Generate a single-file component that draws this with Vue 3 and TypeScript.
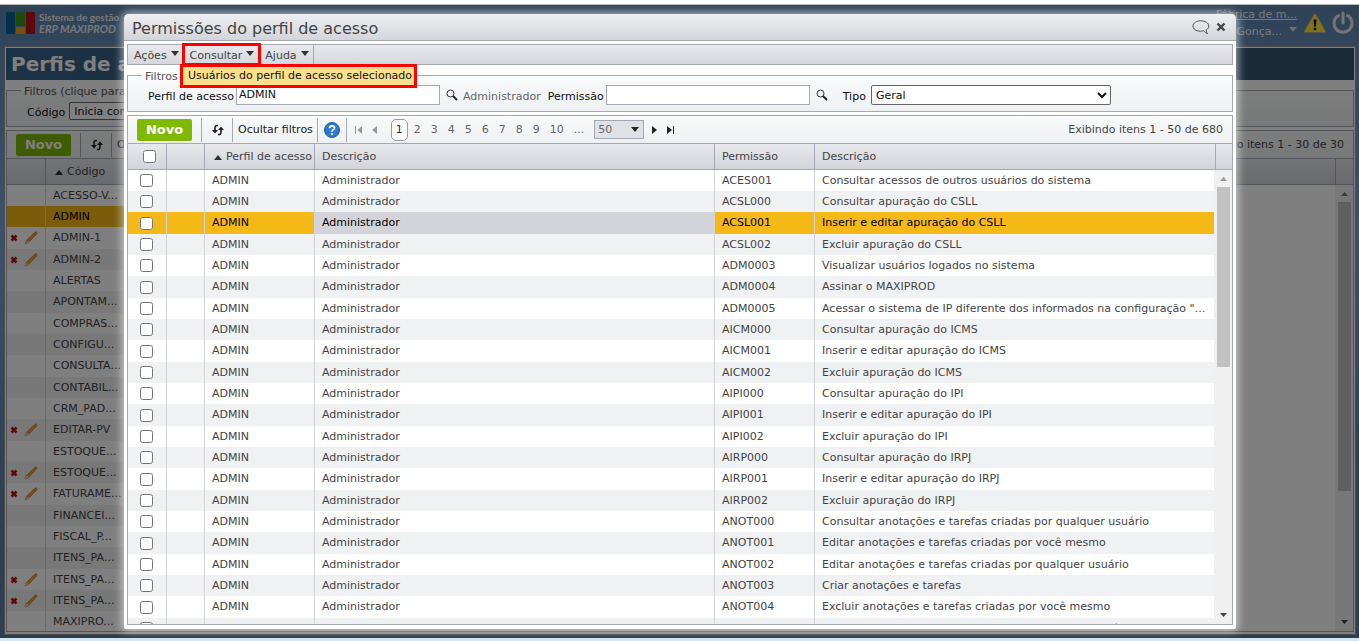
<script setup lang="ts">
import { ref } from 'vue'

interface Profile { code: string; editable?: boolean; selected?: boolean }
interface Permission { code: string; text: string; selected?: boolean }

const profiles: Profile[] = [
  { code: 'ACESSO-V...' },
  { code: 'ADMIN', selected: true },
  { code: 'ADMIN-1', editable: true },
  { code: 'ADMIN-2', editable: true },
  { code: 'ALERTAS' },
  { code: 'APONTAM...' },
  { code: 'COMPRAS...' },
  { code: 'CONFIGU...' },
  { code: 'CONSULTA...' },
  { code: 'CONTABIL...' },
  { code: 'CRM_PAD...' },
  { code: 'EDITAR-PV', editable: true },
  { code: 'ESTOQUE...' },
  { code: 'ESTOQUE...', editable: true },
  { code: 'FATURAME...', editable: true },
  { code: 'FINANCEI...' },
  { code: 'FISCAL_P...' },
  { code: 'ITENS_PA...' },
  { code: 'ITENS_PA...', editable: true },
  { code: 'ITENS_PA...', editable: true },
  { code: 'MAXIPRO...' },
]

const permissions: Permission[] = [
  { code: 'ACES001', text: 'Consultar acessos de outros usuários do sistema' },
  { code: 'ACSL000', text: 'Consultar apuração do CSLL' },
  { code: 'ACSL001', text: 'Inserir e editar apuração do CSLL', selected: true },
  { code: 'ACSL002', text: 'Excluir apuração do CSLL' },
  { code: 'ADM0003', text: 'Visualizar usuários logados no sistema' },
  { code: 'ADM0004', text: 'Assinar o MAXIPROD' },
  { code: 'ADM0005', text: 'Acessar o sistema de IP diferente dos informados na configuração "Endereços de IP"' },
  { code: 'AICM000', text: 'Consultar apuração do ICMS' },
  { code: 'AICM001', text: 'Inserir e editar apuração do ICMS' },
  { code: 'AICM002', text: 'Excluir apuração do ICMS' },
  { code: 'AIPI000', text: 'Consultar apuração do IPI' },
  { code: 'AIPI001', text: 'Inserir e editar apuração do IPI' },
  { code: 'AIPI002', text: 'Excluir apuração do IPI' },
  { code: 'AIRP000', text: 'Consultar apuração do IRPJ' },
  { code: 'AIRP001', text: 'Inserir e editar apuração do IRPJ' },
  { code: 'AIRP002', text: 'Excluir apuração do IRPJ' },
  { code: 'ANOT000', text: 'Consultar anotações e tarefas criadas por qualquer usuário' },
  { code: 'ANOT001', text: 'Editar anotações e tarefas criadas por você mesmo' },
  { code: 'ANOT002', text: 'Editar anotações e tarefas criadas por qualquer usuário' },
  { code: 'ANOT003', text: 'Criar anotações e tarefas' },
  { code: 'ANOT004', text: 'Excluir anotações e tarefas criadas por você mesmo' },
  { code: 'ANOT005', text: 'Excluir anotações e tarefas criadas por qualquer usuário' },
]

const pages = [2, 3, 4, 5, 6, 7, 8, 9, 10]
const profileFilter = ref('ADMIN')
const permissionFilter = ref('')
</script>

<template>
  <div class="screen">
    <div class="app">
      <header class="topbar">
        <svg class="logo" width="30" height="22" viewBox="0 0 30 22" aria-hidden="true">
          <rect x="0" y="0" width="9" height="22" rx="1" fill="#0a6099" />
          <rect x="10" y="0" width="9" height="14" rx="1" fill="#3f9212" />
          <rect x="10" y="15" width="9" height="7" rx="1" fill="#e6a51c" />
          <rect x="20" y="0" width="9" height="22" rx="1" fill="#b8101c" />
        </svg>
        <div class="brand"><span>Sistema de gestão</span><em>ERP MAXIPROD</em></div>
        <div class="account">
          <a href="#">Fábrica de m...</a>
          <span>Gonça...<svg width="8" height="5" viewBox="0 0 8 5"><path d="M0 0h8L4 5z" fill="#ddd" /></svg></span>
        </div>
        <svg class="warn" width="22" height="20" viewBox="0 0 22 20" aria-label="Avisos">
          <path d="M10 1.500Q11 0 12 1.500L21.500 18Q22 19.500 20.500 19.500H1.500Q0 19.500.5 18z" fill="#ffe52e" stroke="#b9a58c" />
          <path d="M9.500 6.500h3l-.6 7h-1.800zM9.800 14.800h2.400v2.400H9.800z" fill="#111" />
        </svg>
        <svg class="power" width="22" height="24" viewBox="0 0 22 24" aria-label="Sair">
          <path d="M6.500 4.500A9 9 0 1 0 15.500 4.500M11 2V12" fill="none" stroke="#e8e8e8" stroke-width="3" stroke-linecap="round" />
        </svg>
      </header>

      <main class="back">
        <h1>Perfis de acesso</h1>
        <fieldset class="filters">
          <legend>Filtros (clique para expandir)</legend>
          <label for="codigo">Código</label>
          <select id="codigo"><option>Inicia com</option></select>
        </fieldset>
        <section class="grid">
          <div class="bar">
            <button type="button" class="novo">Novo</button>
            <button type="button" class="tool icon" aria-label="Atualizar">
              <svg width="14" height="12" viewBox="0 0 14 12"><path d="M7 1.500Q4 1 4 4v4M10 4v4Q10 11 7 10.500" fill="none" stroke="#222" stroke-width="1.600" /><path d="M1 6h6L4 9.500zM7 6L10 2.500 13 6z" fill="#222" /></svg>
            </button>
            <button type="button" class="tool">Ocultar filtros</button>
            <span class="total">Exibindo itens 1 - 30 de 30</span>
          </div>
          <div class="body">
            <table>
              <colgroup><col class="w-act" /><col class="w-code" /><col /><col class="w-bar" /></colgroup>
              <thead><tr><th></th><th><svg class="sort" width="8" height="5" viewBox="0 0 8 5"><path d="M0 5L4 0l4 5z" /></svg>Código</th><th></th><th></th></tr></thead>
            </table>
            <div class="rows">
              <table>
                <colgroup><col class="w-act" /><col class="w-code" /><col /></colgroup>
                <tbody>
                  <tr v-for="(p, i) in profiles" :key="i" :class="{ selected: p.selected }">
                    <td class="acts">
                      <span v-if="p.editable">
                        <svg width="8" height="8" viewBox="0 0 8 8"><path d="M1.500 1.500l5 5M6.500 1.500l-5 5" stroke="#c4101c" stroke-width="2.600" /></svg>
                        <svg width="14" height="14" viewBox="0 0 14 14"><path d="M1 13l1.200-3.400L11 1Q13 0 13.200 2.500L4.500 11.600z" fill="#f0983a" stroke="#b87432" stroke-width=".6" /><path d="M1 13l1.200-3.400 2.300 2z" fill="#e9d6b5" /></svg>
                      </span>
                    </td>
                    <td>{{ p.code }}</td>
                    <td></td>
                  </tr>
                </tbody>
              </table>
              <div class="scroll">
                <svg width="7" height="4" viewBox="0 0 7 4"><path d="M0 4L3.500 0 7 4z" fill="#777" /></svg>
                <i class="thumb"></i>
                <svg width="7" height="4" viewBox="0 0 7 4"><path d="M0 0h7L3.500 4z" fill="#444" /></svg>
              </div>
            </div>
          </div>
        </section>
      </main>
      <div class="shade"></div>
    </div>

    <section class="modal" role="dialog" aria-labelledby="dlg-title">
      <header class="title">
        <h2 id="dlg-title">Permissões do perfil de acesso</h2>
        <button type="button" aria-label="Comentários">
          <svg width="18" height="15" viewBox="0 0 18 15"><path d="M8.800.8C4.300.8 1 3 1 6s3 5.200 7.300 5.200c1.700 0 2.700-.2 3.500-.5 1 1.500 2.200 2.600 3.700 3-.8-1-1.300-2.400-1.300-3.900C15.700 9 16.800 7.600 16.800 6c0-3-3.500-5.200-8-5.200z" fill="none" stroke="#555" /></svg>
        </button>
        <button type="button" aria-label="Fechar">
          <svg width="10" height="10" viewBox="0 0 10 10"><path d="M1.500 1.500l7 7M8.500 1.500l-7 7" stroke="#444" stroke-width="2.400" /></svg>
        </button>
      </header>
      <div class="content">
        <nav class="menu">
          <button type="button">Ações<svg width="8" height="5" viewBox="0 0 8 5"><path d="M0 0h8L4 5z" /></svg></button>
          <button type="button" class="marked">Consultar<svg width="8" height="5" viewBox="0 0 8 5"><path d="M0 0h8L4 5z" /></svg></button>
          <button type="button">Ajuda<svg width="8" height="5" viewBox="0 0 8 5"><path d="M0 0h8L4 5z" /></svg></button>
          <button type="button" class="dropdown">Usuários do perfil de acesso selecionado</button>
        </nav>

        <fieldset class="filters">
          <legend>Filtros</legend>
          <label for="perfil">Perfil de acesso</label>
          <input id="perfil" v-model="profileFilter" type="text" />
          <button type="button" class="lens" aria-label="Buscar perfil"><svg width="12" height="12" viewBox="0 0 12 12"><circle cx="4.500" cy="4.500" r="3.500" fill="none" stroke="#333" /><path d="M7 7l4 4" stroke="#222" stroke-width="2" /></svg></button>
          <span class="found">Administrador</span>
          <label for="perm">Permissão</label>
          <input id="perm" v-model="permissionFilter" type="text" />
          <button type="button" class="lens" aria-label="Buscar permissão"><svg width="12" height="12" viewBox="0 0 12 12"><circle cx="4.500" cy="4.500" r="3.500" fill="none" stroke="#333" /><path d="M7 7l4 4" stroke="#222" stroke-width="2" /></svg></button>
          <label for="tipo" class="tipo">Tipo</label>
          <select id="tipo"><option>Geral</option></select>
        </fieldset>

        <section class="grid">
          <div class="bar">
            <button type="button" class="novo">Novo</button>
            <button type="button" class="tool icon" aria-label="Atualizar">
              <svg width="14" height="12" viewBox="0 0 14 12"><path d="M7 1.500Q4 1 4 4v4M10 4v4Q10 11 7 10.500" fill="none" stroke="#222" stroke-width="1.600" /><path d="M1 6h6L4 9.500zM7 6L10 2.500 13 6z" fill="#222" /></svg>
            </button>
            <button type="button" class="tool">Ocultar filtros</button>
            <button type="button" class="tool help" aria-label="Ajuda">
              <svg width="16" height="16" viewBox="0 0 16 16"><circle cx="8" cy="8" r="7.500" fill="#2f7bd0" stroke="#1e5ba8" /><path d="M5.500 6.200Q5.600 3.800 8 3.800t2.500 2.100Q10.500 7 9.200 7.800T8 9.800" fill="none" stroke="#fff" stroke-width="1.700" /><circle cx="8" cy="12" r="1.100" fill="#fff" /></svg>
            </button>
            <div class="pager">
              <button type="button" aria-label="Primeira"><svg width="7" height="8" viewBox="0 0 7 8"><path d="M0 0h1v8H0zM7 0v8L2.500 4z" fill="#999" /></svg></button>
              <button type="button" aria-label="Anterior"><svg width="5" height="8" viewBox="0 0 5 8"><path d="M5 0v8L0 4z" fill="#999" /></svg></button>
              <b>1</b>
              <a v-for="n in pages" :key="n" href="#">{{ n }}</a>
              <a href="#" class="more">...</a>
              <select aria-label="Itens por página"><option>50</option></select>
              <button type="button" aria-label="Próxima"><svg width="5" height="8" viewBox="0 0 5 8"><path d="M0 0v8l5-4z" fill="#222" /></svg></button>
              <button type="button" aria-label="Última"><svg width="7" height="8" viewBox="0 0 7 8"><path d="M6 0h1v8H6zM0 0v8l5-4z" fill="#222" /></svg></button>
            </div>
            <span class="total">Exibindo itens 1 - 50 de 680</span>
          </div>
          <div class="body">
            <table>
              <colgroup><col class="m-check" /><col class="m-act" /><col class="m-prof" /><col class="m-desc" /><col class="m-perm" /><col /><col class="m-bar" /></colgroup>
              <thead>
                <tr>
                  <th class="check"><input type="checkbox" aria-label="Selecionar todos" /></th><th></th>
                  <th><svg class="sort" width="8" height="5" viewBox="0 0 8 5"><path d="M0 5L4 0l4 5z" /></svg>Perfil de acesso</th>
                  <th>Descrição</th><th>Permissão</th><th>Descrição</th><th></th>
                </tr>
              </thead>
            </table>
            <div class="rows">
              <table>
                <colgroup><col class="m-check" /><col class="m-act" /><col class="m-prof" /><col class="m-desc" /><col class="m-perm" /><col /></colgroup>
                <tbody>
                  <tr v-for="r in permissions" :key="r.code" :class="{ selected: r.selected }">
                    <td class="check"><input type="checkbox" :aria-label="'Selecionar ' + r.code" /></td>
                    <td></td><td>ADMIN</td><td class="desc">Administrador</td><td>{{ r.code }}</td><td>{{ r.text }}</td>
                  </tr>
                </tbody>
              </table>
              <div class="scroll">
                <svg width="7" height="4" viewBox="0 0 7 4"><path d="M0 4L3.500 0 7 4z" fill="#999" /></svg>
                <i class="thumb"></i>
                <svg width="7" height="4" viewBox="0 0 7 4"><path d="M0 0h7L3.500 4z" fill="#444" /></svg>
              </div>
            </div>
          </div>
        </section>
      </div>
    </section>
  </div>
</template>

<style>
body { margin: 0; overflow: hidden; }
</style>

<style scoped>
* { box-sizing: border-box; }
.screen {
  position: relative; height: 100vh; padding: 4px 0 3px; display: flex;
  background: linear-gradient(#fff 50%, #d2e6f2 50%);
  color: #444; font: 11px/20px Verdana, "DejaVu Sans", sans-serif;
}
button, input, select { font: inherit; color: inherit; margin: 0; }
button { border: 0; padding: 0; background: none; }
a { color: inherit; }
.app {
  flex: 1; min-width: 0; position: relative; display: flex; flex-direction: column;
  padding: 0 3px 3px 4px; border-top: 1px solid #bbb;
  background: linear-gradient(#5e84b0, #76a4d8 35%, #5a7aa6 80%);
}
.shade { position: absolute; inset: 0; background: rgba(0, 0, 0, .5); }
.topbar { height: 41px; display: flex; align-items: center; color: #eee; padding: 0 2px 5px; }
.brand { margin-left: 3px; font: bold 10px/12px Lato, sans-serif; }
.brand span, .brand em { display: block; }
.brand em { font-size: 11px; }
.account { margin-left: auto; display: flex; flex-direction: column; align-items: flex-end; line-height: 17px; white-space: nowrap; }
.account svg { margin: 0 0 3px 7px; }
.warn { margin-left: 7px; }
.power { margin-left: 6px; }

.back {
  flex: 1; min-height: 0; display: flex; flex-direction: column;
  padding: 1px 1px 2px; background: #fff; border: 1px solid #999;
}
h1 { margin: 0; height: 32px; padding-left: 5px; background: linear-gradient(90deg, #3a628c, #345472 50%); color: #fff; font-size: 20px; line-height: 32px; }
.filters {
  margin: 0; padding: 0 12px 6px 20px; min-width: 0; border: 1px solid #a5a9b5; display: flex; align-items: center;
  background: linear-gradient(#f9fafa, #eef0f2); color: #111;
}
.filters legend { margin-left: -6px; padding: 4px 3px 0; color: #555; line-height: 16px; }
.filters label, .found { padding-top: 3px; line-height: 17px; }
.back .filters { padding-top: 1px; padding-bottom: 5px; }
.back .filters label { margin-right: 4px; }
.back .filters select { width: 130px; height: 18px; }

.grid { flex: 1; min-height: 0; margin-top: 3px; display: flex; flex-direction: column; border: 1px solid #a5a9b5; }
.bar { height: 27px; flex: none; display: flex; align-items: center; padding: 0 9px; background: linear-gradient(#f9fafa, #eef0f2); }
.novo { width: 55px; height: 22px; border-radius: 2px; background: #7fba00; color: #fff; font-size: 13px; font-weight: bold; }
.tool { height: 24px; padding: 0 4px 0 5px; border-left: 1px solid #a5a9b5; color: #222; white-space: nowrap; }
.tool.icon { margin-left: 9px; width: 31px; }
.tool svg, .pager svg { display: block; margin: 0 auto; }
.tool.help { padding: 0 6px; border-right: 1px solid #a5a9b5; }
.total { margin-left: auto; white-space: nowrap; }
.body { flex: 1; min-height: 0; display: flex; flex-direction: column; }
table { width: 100%; table-layout: fixed; border-collapse: separate; border-spacing: 0; }
th {
  height: 27px; padding: 0 0 0 7px; border: solid #a5a9b5; border-width: 1px 0 1px 1px; text-align: left; font-weight: normal;
  background: linear-gradient(#e8e9ec, #d2d4da); white-space: nowrap; overflow: hidden; line-height: 20px;
}
th:first-child, td:first-child { border-left: 0; }
.sort { margin: 0 4px 0 2px; fill: #333; }
.rows { flex: 1; min-height: 0; display: flex; overflow: hidden; }
.rows table { flex: 1; min-width: 0; align-self: flex-start; }
td {
  height: 21px; padding: 0 2px 0 7px; border-left: 1px solid #d2d4da; white-space: nowrap;
  overflow: hidden; text-overflow: ellipsis; line-height: 20px;
}
tr:nth-child(3n) td { height: 22px; }
tbody tr:nth-child(even) { background: #f0f1f3; }
tbody tr.selected { background: #f4b817; color: #000; }
tr.selected .desc { background: #d2d4da; }
.w-act { width: 38px; } .w-code { width: 81px; } .w-bar { width: 18px; }
.back td:last-child { border-left: 0; background: #fff; }
.acts { padding: 0 2px; }
.acts span { display: flex; align-items: center; gap: 6px; padding-left: 1px; }
.scroll { flex: none; width: 18px; display: flex; flex-direction: column; align-items: center; padding: 7px 0; background: #f0f0f0; }
.scroll .thumb { width: 13px; margin-top: 6px; margin-bottom: auto; height: 41%; background: #c1c1c1; }
.back .scroll .thumb { height: 67%; }

.modal {
  position: absolute; left: 124px; right: 123px; top: 14px; bottom: 12px; display: flex; flex-direction: column;
  background: #fff; border-radius: 5px 5px 2px 2px; box-shadow: 0 0 8px 2px rgba(255, 255, 255, .6);
}
.title { flex: none; height: 27px; display: flex; align-items: center; gap: 6px; padding: 0 10px 0 8px; border-bottom: 1px solid #a5a9b5; border-radius: 5px 5px 0 0; background: linear-gradient(#eeeff1, #d3d5da); }
h2 { flex: 1; margin: 4px 0 0; font-size: 16px; line-height: 22px; font-weight: normal; }
.title svg { display: block; }
.content { flex: 1; min-height: 0; display: flex; flex-direction: column; padding: 3px 3px 4px; }
.menu { position: relative; flex: none; height: 21px; display: flex; border: 1px solid #a5a9b5; background: linear-gradient(#e8e9ec, #d5d7dc); }
.menu button { padding: 2px 4px 0 6px; border-right: 1px solid #a5a9b5; line-height: 17px; white-space: nowrap; }
.menu button svg { margin: 0 0 3px 4px; fill: #333; }
.menu .marked { outline: 3px solid #f00; outline-offset: -1px; z-index: 3; }
.menu .dropdown { position: absolute; z-index: 2; left: 52px; top: 19px; padding: 0 2px 0 5px; border: 3px solid #f00; background: #fbe08b; color: #111; line-height: 18px; }
.filters input { width: 204px; height: 20px; margin-left: 2px; padding: 0 2px; border: 1px solid #a5a9b5; background: #fff; }
.lens { margin: 0 5px 0 6px; }
.lens svg { display: block; }
.found { margin-right: 7px; color: #666; }
.filters .tipo { margin: 0 5px 0 10px; }
.filters select { width: 240px; height: 20px; padding: 0; border: 1px solid #666; border-radius: 2px; background: #fff; }
.pager { display: flex; align-items: center; gap: 10px; margin-left: 8px; color: #666; }
.pager a { text-decoration: none; }
.pager b { width: 17px; height: 22px; margin: 0 -4px 0 4px; border: 1px solid #999; border-radius: 5px; background: #fff; text-align: center; font-weight: normal; color: #333; }
.pager select {
  appearance: none; width: 50px; height: 19px; margin-right: -2px; border: 1px solid #a5a9b5; border-radius: 0; padding: 0 0 0 3px; line-height: 17px;
  background: #dfe1e5 url("data:image/svg+xml,%3Csvg xmlns='http://www.w3.org/2000/svg' width='8' height='5'%3E%3Cpath d='M0 0h8L4 5z' fill='%23222'/%3E%3C/svg%3E") no-repeat right 4px center;
}
.m-check { width: 38px; } .m-act { width: 38px; } .m-prof { width: 110px; } .m-desc { width: 400px; } .m-perm { width: 100px; } .m-bar { width: 17px; }
.check { padding: 0 1px 0 0; }
.check input { display: block; width: 13px; height: 13px; margin: 0 auto; }
th.check { padding: 0 0 0 4px; }
</style>
